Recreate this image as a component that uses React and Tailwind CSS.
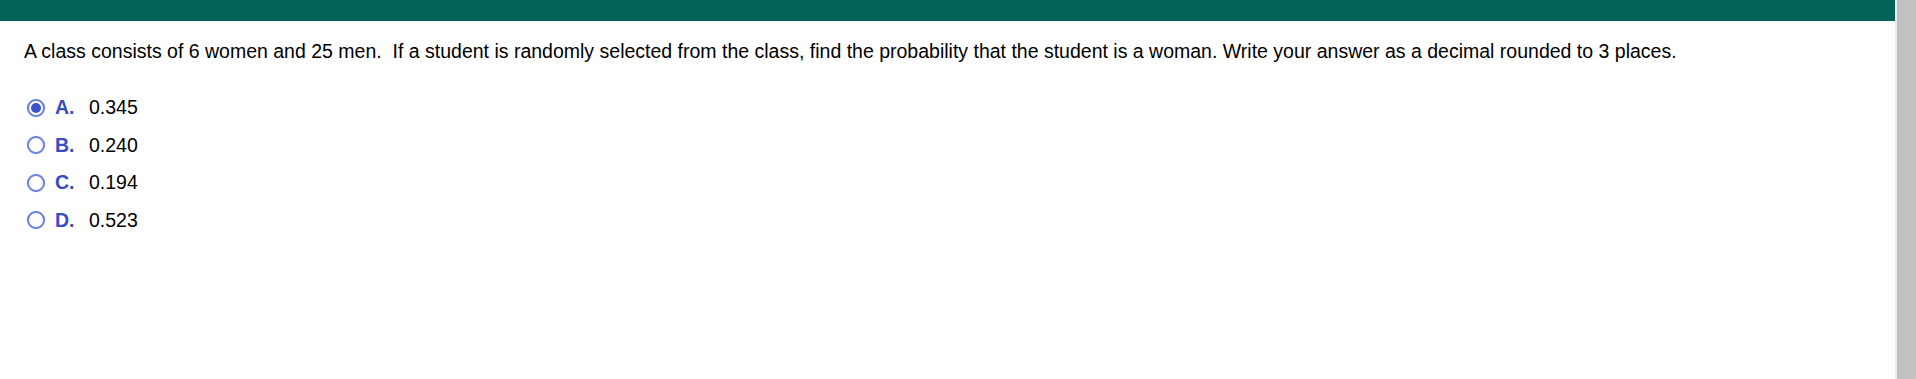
const options = [
  { letter: 'A', value: '0.345', checked: true },
  { letter: 'B', value: '0.240' },
  { letter: 'C', value: '0.194' },
  { letter: 'D', value: '0.523' },
]

function Radio({ checked }) {
  return (
    <span className="h-[18px] w-[18px] rounded-full border-2 border-[#6f82dc] bg-white flex items-center justify-center shadow-[0_0_1px_#9aa8e8]">
      {checked && <span className="h-[10px] w-[10px] rounded-full bg-[#3d50c9]" />}
    </span>
  )
}

export default function App() {
  return (
    <div className="flex h-screen bg-white font-['Liberation_Sans',Arial,sans-serif] text-[19.5px] text-black overflow-hidden">
      <main className="flex-1 min-w-0">
        <div className="h-[21px] bg-[#03635a]" />
        <p className="mt-[19px] pl-[24px] leading-[22px] whitespace-nowrap">
          A class consists of 6 women and 25 men.&nbsp; If a student is randomly selected from the class, find the probability that the student is a woman. Write your answer as a decimal rounded to 3 places.
        </p>
        <ul className="mt-[27px] pl-[27px]">
          {options.map((o) => (
            <li key={o.letter} className="h-[37.5px] flex items-center">
              <Radio checked={o.checked} />
              <span className="ml-[10px] w-[34px] font-bold text-[#3a4cc4]">{o.letter}.</span>
              <span>{o.value}</span>
            </li>
          ))}
        </ul>
      </main>
      <aside className="w-[21px] flex">
        <div className="w-[2px] bg-[#ececec]" />
        <div className="flex-1 bg-[#c1c1c1]" />
      </aside>
    </div>
  )
}
